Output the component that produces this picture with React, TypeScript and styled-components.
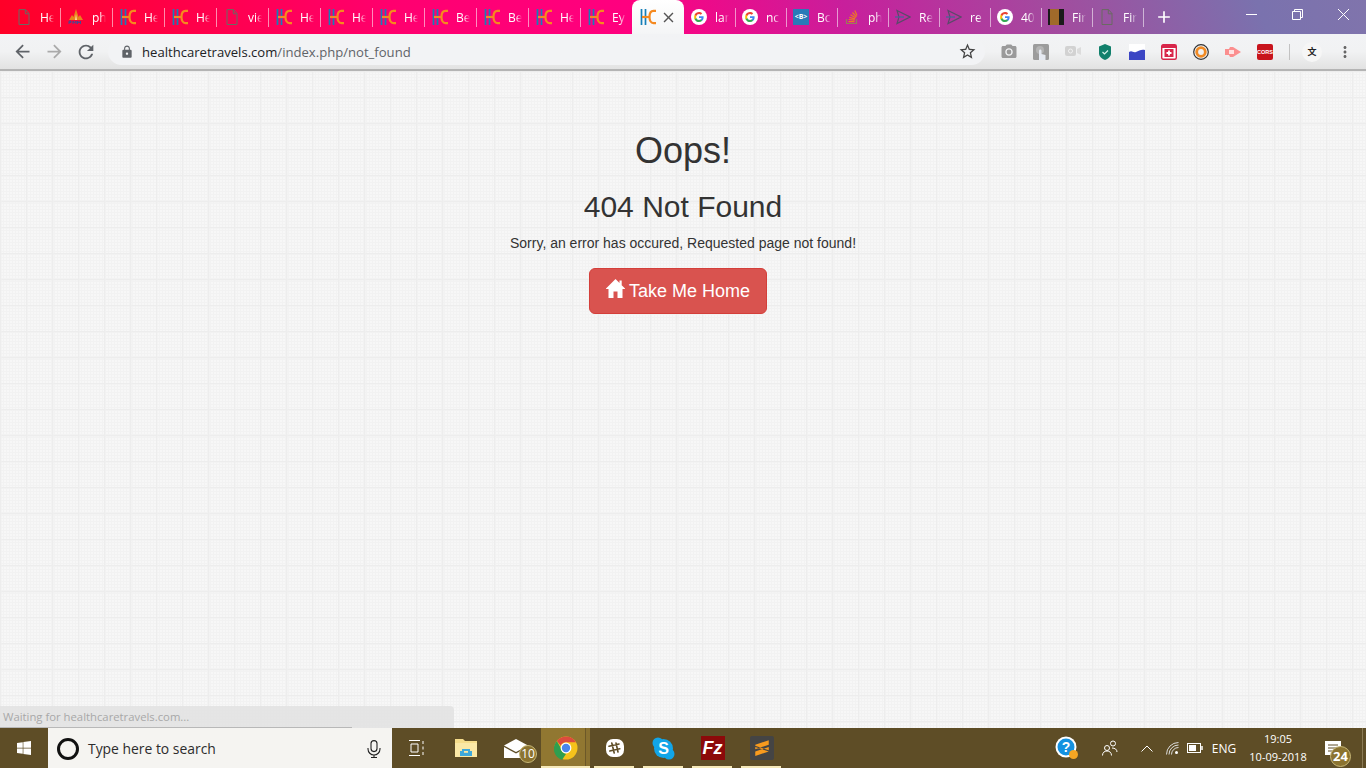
import React from 'react';
import styled, { createGlobalStyle } from 'styled-components';
import { FaWindows } from 'react-icons/fa';
import {
    MdAdd,
    MdArrowBack,
    MdArrowForward,
    MdClose,
    MdLock,
    MdMoreVert,
    MdOutlineStarBorder,
    MdPhotoCamera,
    MdRefresh,
} from 'react-icons/md';

const GlobalStyle = createGlobalStyle`
    html, body {
        margin: 0;
        height: 100%;
        overflow: hidden;
    }
    body {
        font-family: "Liberation Sans", Arial, sans-serif;
        color: #333;
    }
    #root {
        height: 100%;
    }
    * {
        box-sizing: border-box;
    }
`;

const uiFont = `"Open Sans", "Noto Sans", sans-serif`;

/* ---------- favicons ---------- */

const HcIcon = () => (
    <svg width="16" height="16" viewBox="0 0 16 16" fill="none">
        <path d="M1.500 0v16M5.500 0v16" stroke="#157fb8" strokeWidth="1.700" />
        <path d="M2 8h8" stroke="#f5891f" strokeWidth="2.200" />
        <path d="M16 1.800h-2.500C10.800 1.800 9.500 4.800 9.500 8s1.300 6.200 4 6.200H16" stroke="#f5891f" strokeWidth="2.200" />
    </svg>
);

const DocIcon = () => (
    <svg width="16" height="16" viewBox="0 0 16 16" fill="none" stroke="#6a6a62" strokeWidth="1">
        <path d="M3 .6h6.500L13 4.500v11H3z" />
        <path d="M9.300.6v4.200H13" />
    </svg>
);

const GoogleIcon = () => (
    <svg width="16" height="16" viewBox="0 0 16 16">
        <circle cx="8" cy="8" r="8" fill="#fff" />
        <path d="M12.600 8.200c0-.4 0-.7-.1-1H8v1.900h2.600c-.1.600-.5 1.200-1 1.500v1.200h1.600c1-.9 1.400-2.200 1.400-3.600z" fill="#4285f4" />
        <path d="M8 13c1.300 0 2.400-.4 3.200-1.200l-1.600-1.200c-.4.300-1 .5-1.600.5-1.200 0-2.300-.8-2.700-2H3.700v1.300C4.500 12 6.100 13 8 13z" fill="#34a853" />
        <path d="M5.300 9.100c-.2-.7-.2-1.500 0-2.200V5.600H3.700c-.7 1.500-.7 3.300 0 4.800z" fill="#fbbc05" />
        <path d="M8 5c.7 0 1.300.2 1.800.7l1.400-1.400C10.400 3.500 9.200 3 8 3 6.100 3 4.500 4 3.700 5.600l1.600 1.300C5.700 5.800 6.800 5 8 5z" fill="#ea4335" />
    </svg>
);

const PmmIcon = () => (
    <svg width="16" height="16" viewBox="0 0 16 16">
        <path d="M1 11 4 6l1.500 2L8 0l2.500 8L12 6l3 5z" fill="#e8821c" />
        <path d="M7 11 8 5l1 6z" fill="#ffd9a0" />
        <path d="M1 15v-3h2v1.500H1M5 15v-3l1.500 2 1.500-2v3M9.500 15v-3l1.500 2 1.500-2v3" stroke="#33509c" strokeWidth="0.900" fill="none" />
    </svg>
);

const BootstrapBadge = styled.span`
    width: 16px;
    height: 16px;
    background: #2a7ab8;
    color: #fff;
    font: 700 7px/16px ${uiFont};
    text-align: center;
`;

const StackIcon = () => (
    <svg width="16" height="16" viewBox="0 0 16 16" fill="none">
        <path d="M2.500 10v4.500h10V10" stroke="#9a7a5a" strokeWidth="1.200" />
        <path d="M4.500 12.700h6M4.700 10.500l6 .6M5.300 8.300l5.800 1.500M6.500 5.800l5.200 3M8.500 3.500l4 4.300M10.800 1.500l2.200 5" stroke="#ee7a22" strokeWidth="1.200" />
    </svg>
);

const SendIcon = () => (
    <svg width="16" height="16" viewBox="0 0 16 16" fill="none" stroke="#5a4a6a" strokeWidth="1.200">
        <path d="M2 1.500 15 8 2 14.500 4 8z" />
        <path d="M0 8h9" stroke="#3f6a94" />
    </svg>
);

const DarkIcon = styled.span`
    width: 16px;
    height: 16px;
    background: linear-gradient(90deg, #1a1a1a 0 10%, #a06a2a 10% 68%, #1a1a1a 68%);
`;

/* ---------- tab strip ---------- */

const TabStrip = styled.header`
    display: flex;
    align-items: stretch;
    height: 34px;
    padding-left: 8px;
    background: linear-gradient(70deg, #ff0026 0%, #ff0070 30%, #ff0080 47%, #c81f9c 62%, #a04e9f 78%, #7a72ae 92%, #8074ac 100%);
    font-family: ${uiFont};
`;

const Tab = styled.div<{ $wide?: boolean }>`
    position: relative;
    display: flex;
    align-items: center;
    flex: none;
    width: ${({ $wide }) => ($wide ? 52 : 51)}px;
    padding-left: ${({ $wide }) => ($wide ? 8 : 7)}px;
    > svg, > span:first-child {
        flex: none;
    }
    &::after {
        content: '';
        position: absolute;
        right: -1px;
        top: 8px;
        height: 19px;
        width: 1px;
        background: rgba(255, 255, 255, 0.55);
    }
`;

const ActiveTab = styled.div`
    display: flex;
    align-items: center;
    flex: none;
    width: 52px;
    padding-left: 8px;
    gap: 4px;
    background: linear-gradient(#ffffff, #f4f5f6);
    border-radius: 8px 8px 0 0;
    color: #555;
`;

const TabTitle = styled.span`
    flex: none;
    width: 14px;
    margin-left: 8px;
    overflow: hidden;
    color: #fff;
    font-size: 12px;
    white-space: nowrap;
    -webkit-mask-image: linear-gradient(to right, #000 55%, transparent 100%);
    mask-image: linear-gradient(to right, #000 55%, transparent 100%);
`;

const NewTab = styled.div`
    display: flex;
    align-items: center;
    padding-left: 11px;
    color: #fff;
`;

const WindowControls = styled.div`
    display: flex;
    align-items: flex-start;
    margin-left: auto;
    color: #fff;
`;

const WindowButton = styled.div`
    display: flex;
    align-items: center;
    justify-content: center;
    width: 46px;
    height: 28px;
`;

/* ---------- toolbar ---------- */

const Toolbar = styled.div`
    display: flex;
    align-items: center;
    height: 37px;
    padding-left: 6px;
    background: linear-gradient(#f2f3f5 0%, #f1f2f3 50%, #e2e2e2 100%);
    border-bottom: 2px solid #b4b4b4;
`;

const NavButton = styled.div<{ $dim?: boolean }>`
    display: flex;
    align-items: center;
    justify-content: center;
    width: 32px;
    height: 32px;
    color: ${({ $dim }) => ($dim ? '#aaaaaa' : '#5f6368')};
`;

const Omnibox = styled.div`
    display: flex;
    align-items: center;
    width: 877px;
    height: 27px;
    margin-left: 6px;
    padding: 0 8px 0 12px;
    background: #f2f3f5;
    border-radius: 14px;
    color: #5f6368;
    font: 13.100px ${uiFont};
`;

const UrlHost = styled.span`
    margin-left: 8px;
    color: #202124;
`;

const StarSlot = styled.span`
    display: flex;
    margin-left: auto;
    color: #444;
`;

const Extensions = styled.div`
    display: flex;
    align-items: center;
    margin-left: 8px;
`;

const ExtensionSlot = styled.div`
    display: flex;
    align-items: center;
    justify-content: center;
    width: 32px;
    height: 32px;
`;

const ToolbarDivider = styled.div`
    width: 1px;
    height: 16px;
    margin: 0 12px 0 8px;
    background: #c2c2c2;
`;

const Avatar = styled.div`
    display: flex;
    align-items: center;
    justify-content: center;
    width: 20px;
    height: 20px;
    border-radius: 50%;
    background: #f6f6f6;
    color: #222;
    font: 700 9px "Noto Sans CJK SC", sans-serif;
`;

const MenuDots = styled.div`
    display: flex;
    margin-left: 14px;
    color: #666;
`;

const CorsBadge = styled.span`
    width: 16px;
    height: 16px;
    border-radius: 2px;
    background: #c8141c;
    color: #fff;
    font: 700 5.500px/16px "Liberation Sans", sans-serif;
    text-align: center;
`;

/* ---------- page ---------- */

const Page = styled.main`
    position: relative;
    flex: 1;
    min-height: 0;
    text-align: center;
    padding-top: 40px;
    background-color: #f7f7f7;
    background-image:
        linear-gradient(to right, #ededed 1px, #f1f1f1 1px, transparent 2px),
        linear-gradient(to bottom, #ededed 1px, #f1f1f1 1px, transparent 2px),
        linear-gradient(to right, #f2f2f2 1px, transparent 1px),
        linear-gradient(to bottom, #f2f2f2 1px, transparent 1px);
    background-size: 26px 26px, 26px 26px, 3px 3px, 3px 3px;
`;

const Title = styled.h1`
    margin: 20px 0 8px;
    font-size: 36px;
    font-weight: 500;
    line-height: 1.1;
`;

const Subtitle = styled.h2`
    margin: 19px 0 10px;
    font-size: 30px;
    font-weight: 500;
    line-height: 1.1;
`;

const Message = styled.p`
    margin: 0 0 15px;
    font-size: 14px;
    line-height: 20px;
`;

const HomeButton = styled.a`
    display: inline-flex;
    align-items: center;
    gap: 4px;
    height: 46px;
    margin-right: 10px;
    padding: 3px 16px 0;
    background: #d9534f;
    border: 1px solid #d43f3a;
    border-radius: 6px;
    color: #fff;
    font-size: 18px;
    line-height: 1.33;
    text-decoration: none;
    cursor: pointer;
`;

const HomeGlyphSvg = styled.svg`
    margin-bottom: 7px;
`;

const StatusBubble = styled.div`
    position: absolute;
    left: 0;
    bottom: 0;
    width: 454px;
    height: 22px;
    padding: 3px 3px 0;
    background: rgba(226, 226, 226, 0.85);
    border-radius: 0 4px 0 0;
    color: #a8a8a8;
    font: 11.300px/16px ${uiFont};
    text-align: left;
`;

const StatusProgress = styled.div`
    position: absolute;
    left: 0;
    bottom: 0;
    width: 352px;
    height: 1px;
    background: #b8b8b8;
`;

/* ---------- taskbar ---------- */

const Taskbar = styled.footer`
    display: flex;
    align-items: stretch;
    height: 40px;
    background: #5e4d26;
    color: #fff;
    font-family: ${uiFont};
`;

const StartButton = styled.div`
    display: flex;
    align-items: center;
    justify-content: center;
    width: 48px;
`;

const SearchBox = styled.div`
    display: flex;
    align-items: center;
    width: 344px;
    padding: 1px 11px 0 9px;
    background: #f5f4f1;
    color: #2c2c2c;
    font-size: 13.900px;
`;

const CortanaRing = styled.span`
    width: 22px;
    height: 22px;
    margin-right: 9px;
    border: 3px solid #111;
    border-radius: 50%;
`;

const MicSlot = styled.span`
    display: flex;
    margin-left: auto;
`;

const TaskItem = styled.div<{ $width?: number; $running?: boolean; $active?: boolean }>`
    position: relative;
    display: flex;
    align-items: center;
    justify-content: center;
    flex: none;
    width: ${({ $width }) => $width ?? 49}px;
    background: ${({ $active }) =>
        $active ? 'linear-gradient(to right, #917731 0 44px, #6c5828 44px 45px, #8a7130 45px)' : 'none'};
    &::after {
        content: '';
        display: ${({ $running }) => ($running ? 'block' : 'none')};
        position: absolute;
        bottom: 0;
        left: ${({ $active }) => ($active ? 0 : 4)}px;
        right: ${({ $active }) => ($active ? 0 : 5)}px;
        height: 2px;
        background: #f6e9b8;
    }
`;

const CountBadge = styled.span<{ $size: number; $bold?: boolean }>`
    position: absolute;
    right: ${({ $bold }) => ($bold ? 1 : 4)}px;
    bottom: ${({ $bold }) => ($bold ? 1 : 5)}px;
    width: ${({ $size }) => $size}px;
    height: ${({ $size }) => $size}px;
    border-radius: 50%;
    background: #8b7330;
    border: 1px solid #c8b878;
    color: #fff;
    font-size: ${({ $bold }) => ($bold ? 13 : 12)}px;
    font-weight: ${({ $bold }) => ($bold ? 700 : 400)};
    line-height: ${({ $size }) => $size - 2}px;
    text-align: center;
`;

const FzTile = styled.span`
    width: 24px;
    height: 24px;
    background: #8c0a0a;
    color: #fff;
    font: italic 700 18px/24px "Liberation Sans", sans-serif;
    text-align: center;
`;

const SublimeTile = styled.span`
    display: flex;
    align-items: center;
    justify-content: center;
    width: 24px;
    height: 24px;
    border-radius: 2px;
    background: #444;
`;

const Tray = styled.div`
    display: flex;
    align-items: stretch;
    margin-left: auto;
`;

const TrayItem = styled.div<{ $width: number }>`
    position: relative;
    display: flex;
    align-items: center;
    justify-content: center;
    width: ${({ $width }) => $width}px;
    font-size: 12px;
`;

const Clock = styled.div`
    display: flex;
    flex-direction: column;
    align-items: center;
    justify-content: center;
    width: 72px;
    font-size: 11px;
    line-height: 18px;
    white-space: nowrap;
`;

const ShowDesktop = styled.div`
    width: 14px;
    padding-left: 10px;
    &::before {
        content: '';
        display: block;
        width: 1px;
        height: 100%;
        background: #8a7a55;
    }
`;

/* ---------- data ---------- */

const tabs: { icon: React.ReactNode; title: string }[] = [
    { icon: <DocIcon />, title: 'He' },
    { icon: <PmmIcon />, title: 'ph' },
    { icon: <HcIcon />, title: 'He' },
    { icon: <HcIcon />, title: 'He' },
    { icon: <DocIcon />, title: 'vie' },
    { icon: <HcIcon />, title: 'He' },
    { icon: <HcIcon />, title: 'He' },
    { icon: <HcIcon />, title: 'He' },
    { icon: <HcIcon />, title: 'Be' },
    { icon: <HcIcon />, title: 'Be' },
    { icon: <HcIcon />, title: 'He' },
    { icon: <HcIcon />, title: 'Ey' },
];

const laterTabs: { icon: React.ReactNode; title: string }[] = [
    { icon: <GoogleIcon />, title: 'lar' },
    { icon: <GoogleIcon />, title: 'nc' },
    { icon: <BootstrapBadge>&lt;B&gt;</BootstrapBadge>, title: 'Bc' },
    { icon: <StackIcon />, title: 'ph' },
    { icon: <SendIcon />, title: 'Re' },
    { icon: <SendIcon />, title: 're' },
    { icon: <GoogleIcon />, title: '40' },
    { icon: <DarkIcon />, title: 'Fir' },
    { icon: <DocIcon />, title: 'Fir' },
];

const extensions: React.ReactNode[] = [
    <MdPhotoCamera key="camera" size={18} color="#9a9a9a" />,
    <svg key="touch" width="16" height="16" viewBox="0 0 16 16">
        <rect width="16" height="16" rx="1.500" fill="#9c9c9c" />
        <circle cx="7" cy="6" r="4" fill="#b4b4b4" />
        <path d="M6 16V7c0-2 2.500-2 2.500 0v3l4 1v5z" fill="#e6eaf2" />
    </svg>,
    <svg key="video" width="16" height="16" viewBox="0 0 16 16">
        <rect y="2" width="11" height="10" rx="2" fill="#d2d2d2" />
        <path d="M12 5l4-2v8l-4-2z" fill="#dcdcdc" />
        <circle cx="5.500" cy="7" r="2" fill="none" stroke="#f2f2f2" />
    </svg>,
    <svg key="shield" width="16" height="16" viewBox="0 0 16 16">
        <path d="M8 0l6 2.500v7C14 12.500 11 15 8 16c-3-1-6-3.500-6-6.500v-7z" fill="#12806c" />
        <path d="M5.500 8l2 2 3.500-3.500" stroke="#d6f2ea" strokeWidth="1.200" fill="none" />
    </svg>,
    <svg key="wave" width="16" height="16" viewBox="0 0 16 16">
        <rect width="16" height="16" fill="#fff" />
        <path d="M0 8c3-2 4 1 7 0s5-3 9-2v10H0z" fill="#3c46c4" />
    </svg>,
    <svg key="calendar" width="16" height="16" viewBox="0 0 16 16">
        <rect x="0.700" y="0.700" width="14.600" height="14.600" rx="1.500" fill="#fff" stroke="#d8264a" strokeWidth="1.400" />
        <rect x="1" y="1" width="14" height="3" fill="#d8264a" />
        <rect x="3.500" y="5" width="9" height="8" fill="#d8264a" />
        <path d="M8 6.500v5M5.500 9h5" stroke="#fff" strokeWidth="1.800" />
    </svg>,
    <svg key="ring" width="16" height="16" viewBox="0 0 16 16" fill="none">
        <circle cx="8" cy="8" r="7.300" stroke="#333" strokeWidth="1.200" />
        <circle cx="8" cy="8" r="4.300" stroke="#f08a24" strokeWidth="2.800" />
    </svg>,
    <svg key="play" width="16" height="16" viewBox="0 0 16 16">
        <path d="M0 5h4l1-2h3l8 5-8 5H5l-1-2H0z" fill="#fb8f8f" />
        <rect x="4" y="6" width="5" height="4" fill="#ffe2e2" />
    </svg>,
    <CorsBadge key="cors">CORS</CorsBadge>,
];

const ChromeLogo = () => (
    <svg width="24" height="24" viewBox="0 0 24 24">
        <circle cx="12" cy="12" r="11.500" fill="#f5c21b" />
        <path d="M12 .5a11.500 11.500 0 0 1 10 5.800H12a5.700 5.700 0 0 0-5.200 3.400L2.800 5.100A11.500 11.500 0 0 1 12 .5z" fill="#dd4b3e" />
        <path d="M2.800 5.100l4 6.900a5.700 5.700 0 0 0 5.300 5.700l-3.900 6.100A11.500 11.500 0 0 1 2.800 5.100z" fill="#2f9e4f" />
        <circle cx="12" cy="12" r="5.400" fill="#fff" />
        <circle cx="12" cy="12" r="4.200" fill="#4a85ec" />
    </svg>
);

const FolderIcon = () => (
    <svg width="22" height="20" viewBox="0 0 22 20">
        <path d="M0 1h8l2 2h12v16H0z" fill="#f6dd8b" />
        <path d="M0 5h22v14H0z" fill="#fbe8a6" />
        <path d="M7 11h8v2h2v5H5v-5h2z" fill="#3fa9dc" />
        <rect x="9" y="13" width="4" height="1.800" fill="#fbe8a6" />
    </svg>
);

const MailIcon = () => (
    <svg width="24" height="19" viewBox="0 0 24 19">
        <path d="M0 6.500 12 0l12 6.500L12 13z" fill="#fff" />
        <path d="M0 8l12 6.500L24 8v11H0z" fill="#fff" />
    </svg>
);

const SlackIcon = () => (
    <svg width="20" height="20" viewBox="0 0 20 20" fill="none">
        <rect width="18" height="18" x="1" y="1" rx="7" fill="#fff" />
        <path d="M7.800 5l2.400 10M12 5l2 9M5 8.300l10-2.300M5.800 13l10-2.300" stroke="#5e4d26" strokeWidth="1.600" strokeLinecap="round" transform="translate(-1 0)" />
    </svg>
);

const SkypeIcon = () => (
    <svg width="23" height="23" viewBox="0 0 23 23">
        <circle cx="6" cy="6" r="5.500" fill="#12a5e8" />
        <circle cx="17" cy="17" r="5.500" fill="#12a5e8" />
        <circle cx="11.500" cy="11.500" r="9.500" fill="#12a5e8" />
        <text x="11.500" y="17" fontSize="16" fontWeight="700" fill="#fff" textAnchor="middle" fontFamily="Liberation Sans">S</text>
    </svg>
);

const HomeGlyph = () => (
    <HomeGlyphSvg width="19" height="19" viewBox="0 0 19 19" fill="#fff">
        <path d="M9.500 0 13.500 4V1.500h2.200v4.700L19 9.500v.5h-2.500v9h-5v-6.500h-4V19h-5v-9H0v-.5z" />
    </HomeGlyphSvg>
);

const App: React.FC = () => (
    <>
        <GlobalStyle />
        <Shell>
            <TabStrip>
                {tabs.map((tab, i) => (
                    <Tab key={i} $wide>
                        {tab.icon}
                        <TabTitle>{tab.title}</TabTitle>
                    </Tab>
                ))}
                <ActiveTab>
                    <HcIcon />
                    <MdClose size={17} />
                </ActiveTab>
                {laterTabs.map((tab, i) => (
                    <Tab key={i}>
                        {tab.icon}
                        <TabTitle>{tab.title}</TabTitle>
                    </Tab>
                ))}
                <NewTab>
                    <MdAdd size={20} />
                </NewTab>
                <WindowControls>
                    <WindowButton>
                        <svg width="11" height="11" viewBox="0 0 11 11" stroke="#fff" fill="none">
                            <path d="M0 5.500h11" />
                        </svg>
                    </WindowButton>
                    <WindowButton>
                        <svg width="11" height="11" viewBox="0 0 11 11" stroke="#fff" fill="none">
                            <path d="M.5 2.500h8v8h-8zM2.500 2.500v-2h8v8h-2" />
                        </svg>
                    </WindowButton>
                    <WindowButton>
                        <svg width="11" height="11" viewBox="0 0 11 11" stroke="#fff" fill="none">
                            <path d="M0 0l11 11M11 0L0 11" />
                        </svg>
                    </WindowButton>
                </WindowControls>
            </TabStrip>

            <Toolbar>
                <NavButton>
                    <MdArrowBack size={21} />
                </NavButton>
                <NavButton $dim>
                    <MdArrowForward size={21} />
                </NavButton>
                <NavButton>
                    <MdRefresh size={22} />
                </NavButton>
                <Omnibox>
                    <MdLock size={14} />
                    <UrlHost>healthcaretravels.com</UrlHost>
                    /index.php/not_found
                    <StarSlot>
                        <MdOutlineStarBorder size={19} />
                    </StarSlot>
                </Omnibox>
                <Extensions>
                    {extensions.map((ext, i) => (
                        <ExtensionSlot key={i}>{ext}</ExtensionSlot>
                    ))}
                    <ToolbarDivider />
                    <Avatar>文</Avatar>
                    <MenuDots>
                        <MdMoreVert size={18} />
                    </MenuDots>
                </Extensions>
            </Toolbar>

            <Page>
                <Title>Oops!</Title>
                <Subtitle>404 Not Found</Subtitle>
                <Message>Sorry, an error has occured, Requested page not found!</Message>
                <HomeButton>
                    <HomeGlyph />
                    Take Me Home
                </HomeButton>
                <StatusBubble>
                    Waiting for healthcaretravels.com...
                    <StatusProgress />
                </StatusBubble>
            </Page>

            <Taskbar>
                <StartButton>
                    <FaWindows size={16} />
                </StartButton>
                <SearchBox>
                    <CortanaRing />
                    Type here to search
                    <MicSlot>
                        <svg width="14" height="18" viewBox="0 0 14 18" fill="none" stroke="#222" strokeWidth="1.100">
                            <rect x="4" y="0.600" width="6" height="11" rx="3" />
                            <path d="M1 8v1a6 6 0 0 0 12 0V8M7 15v2.500M4 17.500h6" />
                        </svg>
                    </MicSlot>
                </SearchBox>
                <TaskItem>
                    <svg width="16" height="16" viewBox="0 0 16 16" fill="none" stroke="#fff">
                        <path d="M0 .5h11M0 15.500h11M2 4h7v8H2zM14 1v3M14 6.500v3M14 12v3" />
                    </svg>
                </TaskItem>
                <TaskItem>
                    <FolderIcon />
                </TaskItem>
                <TaskItem $width={51}>
                    <MailIcon />
                    <CountBadge $size={18}>10</CountBadge>
                </TaskItem>
                <TaskItem $active $running>
                    <ChromeLogo />
                </TaskItem>
                <TaskItem $running>
                    <SlackIcon />
                </TaskItem>
                <TaskItem $running>
                    <SkypeIcon />
                </TaskItem>
                <TaskItem $running>
                    <FzTile>Fz</FzTile>
                </TaskItem>
                <TaskItem $running>
                    <SublimeTile>
                        <svg width="16" height="18" viewBox="0 0 14 16" fill="#f79a1e">
                            <path d="M13 1v4L1 9V5zM1 7l12 4v-1L1 6zM13 7v4L1 15v-4z" />
                        </svg>
                    </SublimeTile>
                </TaskItem>

                <Tray>
                    <TrayItem $width={38}>
                        <svg width="24" height="24" viewBox="0 0 24 24">
                            <circle cx="11" cy="11" r="10.500" fill="#fff" />
                            <circle cx="11" cy="11" r="8.500" fill="#1491e0" />
                            <text x="11" y="16" fontSize="14" fontWeight="700" fill="#fff" textAnchor="middle" fontFamily="Liberation Sans">?</text>
                            <circle cx="18.500" cy="18.500" r="4.500" fill="#f5a623" />
                        </svg>
                    </TrayItem>
                    <TrayItem $width={48}>
                        <svg width="16" height="16" viewBox="0 0 16 16" fill="none" stroke="#fff">
                            <circle cx="11" cy="3.500" r="2.500" />
                            <circle cx="5" cy="8" r="2.500" />
                            <path d="M.5 15.500c0-3 2-4.500 4.500-4.500s4.500 1.500 4.500 4.500M10 8c3 0 5 1.500 5 4" />
                        </svg>
                    </TrayItem>
                    <TrayItem $width={26}>
                        <svg width="12" height="7" viewBox="0 0 12 7" fill="none" stroke="#fff">
                            <path d="M.5 6.500 6 1l5.500 5.500" />
                        </svg>
                    </TrayItem>
                    <TrayItem $width={24}>
                        <svg width="13" height="13" viewBox="0 0 13 13" fill="none" stroke="#ddd" strokeWidth="1">
                            <path d="M.5 12.500A12 12 0 0 1 12.500.5M3 12.500A9.500 9.500 0 0 1 12.500 3M5.500 12.500a7 7 0 0 1 7-7" />
                            <circle cx="10.500" cy="10.500" r="1.500" fill="#fff" stroke="none" />
                        </svg>
                    </TrayItem>
                    <TrayItem $width={22}>
                        <svg width="16" height="10" viewBox="0 0 16 10" fill="none" stroke="#fff">
                            <rect x="0.500" y="0.500" width="13" height="9" />
                            <rect x="2" y="2" width="7" height="6" fill="#fff" stroke="none" />
                            <path d="M15 3v4" strokeWidth="1.500" />
                        </svg>
                    </TrayItem>
                    <TrayItem $width={36}>ENG</TrayItem>
                    <Clock>
                        <span>19:05</span>
                        <span>10-09-2018</span>
                    </Clock>
                    <TrayItem $width={38}>
                        <svg width="16" height="14" viewBox="0 0 16 14">
                            <path d="M0 0h16v14H0z" fill="#fff" />
                            <path d="M3 4h10M3 7h10M3 10h7" stroke="#5e4d26" />
                        </svg>
                        <CountBadge $size={21} $bold>24</CountBadge>
                    </TrayItem>
                    <ShowDesktop />
                </Tray>
            </Taskbar>
        </Shell>
    </>
);

const Shell = styled.div`
    display: flex;
    flex-direction: column;
    height: 768px;
`;

export default App;
